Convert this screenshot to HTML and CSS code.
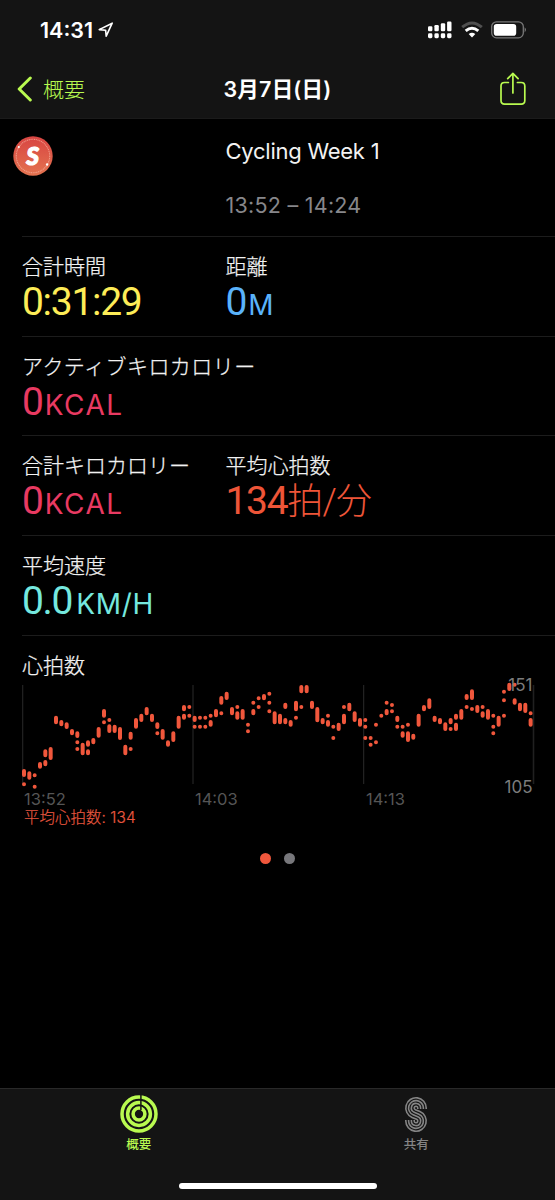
FILE: index.html
```html
<!DOCTYPE html>
<html lang="ja">
<head>
<meta charset="utf-8">
<title>3月7日(日)</title>
<link rel="stylesheet" href="styles.css">
</head>
<body>
<div class="screen">
  <header class="top">
    <div class="status">
      <div class="clock"><span class="clock-time">14:31</span>
        <svg class="location" width="16" height="16" viewBox="0 0 16 16"><path d="M1.2 7.6 14.2 1.2 8.2 14.2 7.6 8.2Z" fill="none" stroke="#fff" stroke-width="1.6" stroke-linejoin="round"/></svg>
      </div>
      <div class="indicators">
        <svg width="24" height="18" viewBox="0 0 24 18" fill="#fff"><rect x="0" y="5.3" width="4.4" height="5" rx="1.2"/><rect x="6.4" y="4" width="4.4" height="6.3" rx="1.2"/><rect x="12.8" y="2.3" width="4.4" height="8" rx="1.2"/><rect x="19.1" y="0.6" width="4.4" height="9.7" rx="1.2"/><rect x="0" y="12.3" width="4.4" height="4.9" rx="1.4"/><rect x="6.4" y="12.3" width="4.4" height="4.9" rx="1.4"/><rect x="12.8" y="12.3" width="4.4" height="4.9" rx="1.4"/><rect x="19.1" y="12.3" width="4.4" height="4.9" rx="1.4"/></svg>
        <svg class="wifi" width="22" height="18" viewBox="0 0 22 18" fill="none"><path d="M1.2 6.2Q11 -2.3 20.8 6.2" stroke="#505050" stroke-width="3"/><path d="M4.7 9.9Q11 4.6 17.3 9.9" stroke="#fff" stroke-width="3"/><path d="M7.7 13.1Q11 10.3 14.3 13.1L11 16.6Z" fill="#fff"/></svg>
        <svg class="battery" width="36" height="18" viewBox="0 0 36 18"><rect x="0.7" y="0.8" width="31.6" height="16" rx="4.8" fill="none" stroke="#777" stroke-width="1.3"/><rect x="2.8" y="2.9" width="22.4" height="11.8" rx="2.8" fill="#fff"/><path d="M33.6 6.2q2.8 2.6 0 5.2z" fill="#777"/></svg>
      </div>
    </div>
    <nav class="nav">
      <a class="back"><svg width="15" height="26" viewBox="0 0 15 26"><path d="M13.3 2 2.2 13 13.3 24" fill="none" stroke="#b9fa50" stroke-width="3" stroke-linecap="round" stroke-linejoin="round"/></svg><span>概要</span></a>
      <h1 class="title">3月7日(日)</h1>
      <svg class="share" width="26" height="34" viewBox="0 0 26 34" fill="none" stroke="#b9fa50" stroke-width="1.7" stroke-linecap="round" stroke-linejoin="round"><path d="M8.4 10.5H4.6Q1 10.5 1 14.1V28.6Q1 32.2 4.6 32.2H21.2Q24.8 32.2 24.8 28.6V14.1Q24.8 10.5 21.2 10.5H17.4M12.9 21V1.5M7.7 6.7 12.9 1.3 18.1 6.7"/></svg>
    </nav>
  </header>

  <main>
    <section class="workout">
      <svg class="badge" width="40" height="40" viewBox="0 0 40 40"><defs><linearGradient id="g" x2="0" y2="1"><stop stop-color="#d84542"/><stop offset="1" stop-color="#e47350"/></linearGradient></defs><circle cx="20" cy="20" r="19.7" fill="url(#g)"/><circle cx="20" cy="20" r="16.7" fill="none" stroke="#f6b5a2" stroke-width="1.1" stroke-dasharray="1.1 .7" opacity=".7"/><circle cx="5.8" cy="11" r="1.1" fill="#fff"/><circle cx="34.1" cy="28.5" r="1.2" fill="#fff"/><text class="badge-letter" x="19.6" y="28.6" text-anchor="middle">S</text></svg>
      <div class="workout-name">Cycling Week 1</div>
      <div class="workout-time">13:52 – 14:24</div>
    </section>
    <section class="row">
      <div class="metric"><div class="label">合計時間</div><div class="value yellow">0:31:29</div></div>
      <div class="metric"><div class="label">距離</div><div class="value blue">0<span class="unit">M</span></div></div>
    </section>
    <section class="row">
      <div class="metric"><div class="label wide">アクティブキロカロリー</div><div class="value pink">0<span class="unit">KCAL</span></div></div>
    </section>
    <section class="row">
      <div class="metric"><div class="label">合計キロカロリー</div><div class="value pink">0<span class="unit">KCAL</span></div></div>
      <div class="metric"><div class="label">平均心拍数</div><div class="value orange">134<span class="beats">拍/分</span></div></div>
    </section>
    <section class="row">
      <div class="metric"><div class="label">平均速度</div><div class="value cyan">0.0<span class="unit speed">KM/H</span></div></div>
    </section>
    <section class="heart">
      <div class="label">心拍数</div>
      <div class="chart">
        <svg class="plot" width="513" height="112" viewBox="0 0 513 112"><path class="grid edge" d="M.5 4V103M511.5 4V103"/><path class="grid" d="M171 4V103M341.7 4V103"/><path class="beats-path" id="beats"/></svg>
        <span class="bound high">151</span><span class="bound low">105</span>
      </div>
      <div class="ticks"><span>13:52</span><span>14:03</span><span>14:13</span></div>
      <div class="average">平均心拍数: 134</div>
    </section>
    <div class="pager"><i class="dot on"></i><i class="dot"></i></div>
  </main>

  <footer class="tabs">
    <div class="tab active">
      <svg width="38" height="38" viewBox="0 0 38 38" fill="none" stroke="#b9fa50" stroke-width="3.5"><circle cx="19" cy="19" r="17"/><circle cx="19" cy="19" r="11.4"/><circle cx="19" cy="19" r="5.9"/><path d="M20.9 0V15" stroke="#141414" stroke-width="1.5"/></svg>
      <span>概要</span>
    </div>
    <div class="tab">
      <svg width="38" height="38" viewBox="-8 -2 38 38" fill="none"><defs><path id="s" d="M17 12V11A6 6 0 1 0 8.69 16.54L13.31 18.46A6 6 0 1 1 5 24V23"/></defs><use href="#s" stroke="#858585" stroke-width="10"/><use href="#s" stroke="#141414" stroke-width="6.8"/><use href="#s" stroke="#858585" stroke-width="4.4"/><use href="#s" stroke="#141414" stroke-width="1.2"/></svg>
      <span>共有</span>
    </div>
    <div class="home"></div>
  </footer>
</div>
<script src="chart.js"></script>
</body>
</html>
```
FILE: styles.css
```css
* { box-sizing: border-box; }
body { margin: 0; background: #000; color: #f2f2f2; font-family: Inter, "Noto Sans CJK JP", sans-serif; }
.screen { width: 555px; height: 1200px; display: flex; flex-direction: column; overflow: hidden; }
.top { height: 119px; background: #141414; border-bottom: 1px solid #1b1b1b; flex: none; }
.status { height: 60px; padding: 0 28px 0 40px; display: flex; justify-content: space-between; align-items: center; }
.clock { display: flex; align-items: center; gap: 5px; color: #fff; }
.clock-time { font-size: 21.5px; font-weight: 600; }
.indicators { display: flex; align-items: center; gap: 8.5px; }
.nav { height: 58px; display: grid; grid-template-columns: 1fr auto 1fr; align-items: center; padding: 0 17px; }
.back { display: flex; align-items: center; gap: 11px; color: #b9fa50; font-size: 21px; font-weight: 300; }
.back span { margin-top: -3px; }
.title { margin: -3px 0 0; font-size: 21.5px; font-weight: 600; color: #fff; letter-spacing: .2px; }
.share { justify-self: end; margin-right: 12px; }
main { flex: 1; }
.workout { height: 117px; display: grid; grid-template-columns: 212.5px 1fr; grid-template-rows: 64px 53px; padding-left: 13px; }
.badge { margin-top: 17px; }
.badge-letter { font: italic 900 24.5px Lato, sans-serif; fill: #fff; stroke: #fff; stroke-width: 1.2px; }
.workout-name { font-size: 22px; line-height: 64px; letter-spacing: -.25px; }
.workout-time { grid-column: 2; font-size: 21.5px; line-height: 44px; letter-spacing: .25px; color: #87878b; }
.row { height: 99.7px; margin-left: 22px; border-top: 1px solid #1c1c1c; display: grid; grid-template-columns: 203.5px 1fr; padding-top: 15px; }
.label { font-size: 21px; line-height: 30px; font-weight: 300; -webkit-text-stroke: .25px; white-space: nowrap; }
.wide { letter-spacing: .45px; }
.value { font-family: Roboto, "Noto Sans CJK JP", sans-serif; font-size: 39px; line-height: 40px; font-weight: 400; letter-spacing: -1.3px; white-space: nowrap; }
.unit { font-family: Inter, sans-serif; font-size: 28px; font-weight: 400; letter-spacing: 1.5px; margin-left: 2px; }
.speed { letter-spacing: .7px; margin-left: 4px; }
.beats { font-size: 36px; font-weight: 300; letter-spacing: -.8px; }
.yellow { color: #fdec57; }
.blue { color: #5ab3fb; }
.pink { color: #e93a62; }
.orange { color: #ee5538; }
.cyan { color: #75e8df; }
.heart { margin-left: 22px; border-top: 1px solid #1c1c1c; padding-top: 15px; }
.chart { position: relative; height: 109px; }
.plot { display: block; }
.grid { stroke: #2b2b2b; stroke-width: 1; fill: none; }
.edge { stroke: #202020; stroke-width: 1.6; }
.beats-path { stroke: #f0573c; stroke-width: 4; stroke-linecap: round; fill: none; }
.bound { position: absolute; right: 22.5px; font-size: 17px; line-height: 20px; color: #929292; opacity: .85; }
.high { top: -6px; }
.low { top: 96px; }
.ticks { display: grid; grid-template-columns: 171px 171px 1fr; padding-left: 2px; font-size: 16.5px; line-height: 18px; color: #555; }
.average { padding-left: 2px; font-size: 15.4px; font-weight: 300; -webkit-text-stroke: .2px; line-height: 20px; letter-spacing: .1px; color: #e8573f; }
.pager { display: flex; justify-content: center; gap: 13px; margin-top: 25px; }
.dot { width: 11px; height: 11px; border-radius: 50%; background: #77777b; }
.dot.on { background: #f0573c; }
.tabs { height: 112px; flex: none; background: #141414; border-top: 1px solid #292929; display: grid; grid-template-columns: 1fr 1fr; grid-template-rows: 94px 6px; }
.tab { display: flex; flex-direction: column; align-items: center; gap: 2px; padding-top: 6px; font-size: 12.5px; line-height: 20px; font-weight: 500; color: #858585; }
.active { color: #b9fa50; }
.home { grid-column: 1 / 3; justify-self: center; width: 198px; height: 6px; border-radius: 3px; background: #fff; }
```
FILE: chart.js
```js
// Each column lists its heart-rate bars as top-bottom pairs, or a single centre for a dot (thirds of a pixel).
const columns = `372-396 418|379-404|391 425|351-371|313-337 345-364|306-345|212-238|225-244|232-252|252-271|259-279 292 312|293-331|286-305 313-331|279-298|246-278|192-218 232|225 238-264|239-264|246-285|299-331|260-284 312|219-251|206-231|186-211|206-231|232-252 265|252-284|286-305|259-291|212-251|180-199 206-224|186 212|212-231 245|218 245|218 245|212 225-245|192-217|153-179 205|140-165|186-211|186 199-224|192-224|239 259|173 192-211|160 186|147-166|146 173 199|199-238|206-238|173-192 219-238|225-245|167-199 218|120-145 186|120-145|167-192|186-232|219-238|212 225-245|245 279|233-258|186 206-238|173-199|199-231|219-245|225 245 279|279 299|239 292|212|173 192-211|180 199|212-231 245|245 259-278|239 259-291|266-284|206-245|180-199|160-192|212-231|219-238|232-258|219-238 252|206-224 233-258|192-224|147-165 186|133-165 192|180-204|186 199-218|192-224|212 245 265|212-245|140 166 212|113-138|119 160-179|173-199|173-204|205 219-245`;
const d = columns.split('|').map((column, i) => column.split(' ').map(bar => {
  const [a, b] = bar.split('-').map(Number);
  const top = b ? a + 6 : a;
  const end = b ? b - 6 : a + 0.1;
  return `M${(2 + i * 5.333).toFixed(2)} ${(top / 3 - 36).toFixed(2)}V${(end / 3 - 36).toFixed(2)}`;
}).join('')).join('');
document.getElementById('beats').setAttribute('d', d);
```
